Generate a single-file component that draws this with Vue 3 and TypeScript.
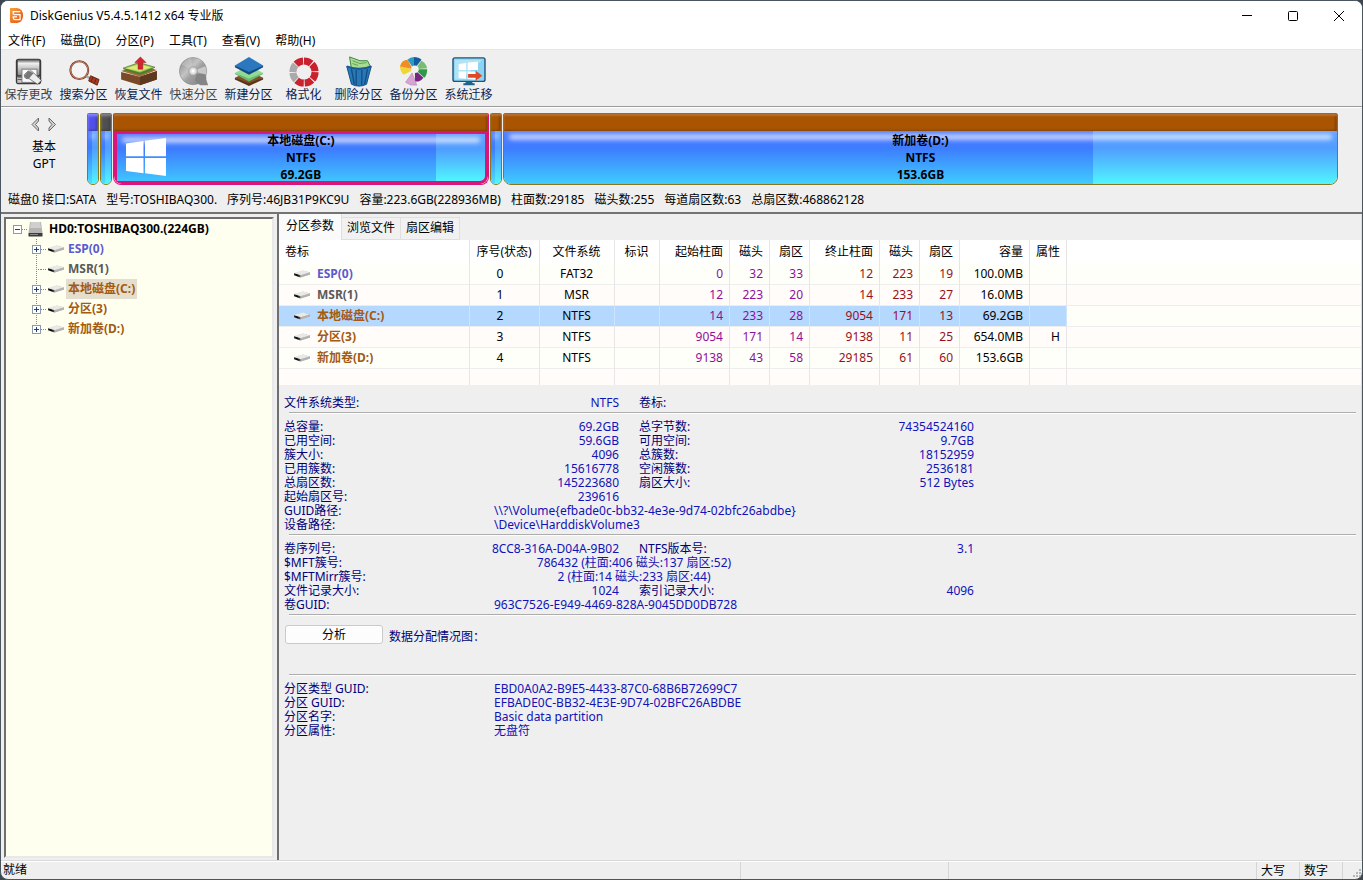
<script setup lang="ts">
import { ref } from 'vue'

interface Volume {
  name: string
  tone: string
  index: number
  fs: string
  start: number[]
  end: number[]
  size: string
  attr: string
  expandable: boolean
}

interface Segment {
  kind: string
  grow: number
  used: number
  lines: string[]
}

interface Detail {
  label: string
  value: string
  label2?: string
  value2?: string
  mode?: string
}

const menus = ['文件(F)', '磁盘(D)', '分区(P)', '工具(T)', '查看(V)', '帮助(H)']
const tools = [
  { icon: 'save', text: '保存更改', dim: true },
  { icon: 'search', text: '搜索分区', dim: false },
  { icon: 'recover', text: '恢复文件', dim: false },
  { icon: 'quick', text: '快速分区', dim: true },
  { icon: 'create', text: '新建分区', dim: false },
  { icon: 'format', text: '格式化', dim: false },
  { icon: 'remove', text: '删除分区', dim: false },
  { icon: 'backup', text: '备份分区', dim: false },
  { icon: 'migrate', text: '系统迁移', dim: false },
]

const segments: Segment[] = [
  { kind: 'esp', grow: 0, used: 40, lines: [] },
  { kind: 'msr', grow: 0, used: 40, lines: [] },
  { kind: 'active', grow: 375, used: 86.8, lines: ['本地磁盘(C:)', 'NTFS', '69.2GB'] },
  { kind: 'thin', grow: 0, used: 40, lines: [] },
  { kind: 'wide', grow: 836, used: 70.7, lines: ['新加卷(D:)', 'NTFS', '153.6GB'] },
]

const volumes: Volume[] = [
  { name: 'ESP(0)', tone: 'violet', index: 0, fs: 'FAT32', start: [0, 32, 33], end: [12, 223, 19], size: '100.0MB', attr: '', expandable: true },
  { name: 'MSR(1)', tone: 'grey', index: 1, fs: 'MSR', start: [12, 223, 20], end: [14, 233, 27], size: '16.0MB', attr: '', expandable: false },
  { name: '本地磁盘(C:)', tone: 'brown', index: 2, fs: 'NTFS', start: [14, 233, 28], end: [9054, 171, 13], size: '69.2GB', attr: '', expandable: true },
  { name: '分区(3)', tone: 'brown', index: 3, fs: 'NTFS', start: [9054, 171, 14], end: [9138, 11, 25], size: '654.0MB', attr: 'H', expandable: true },
  { name: '新加卷(D:)', tone: 'brown', index: 4, fs: 'NTFS', start: [9138, 43, 58], end: [29185, 61, 60], size: '153.6GB', attr: '', expandable: true },
]

const columns = [
  { text: '卷标', cls: 'c-name' },
  { text: '序号(状态)', cls: 'c-70 mid' },
  { text: '文件系统', cls: 'c-75 mid' },
  { text: '标识', cls: 'c-45 mid' },
  { text: '起始柱面', cls: 'c-70 end' },
  { text: '磁头', cls: 'c-40 end' },
  { text: '扇区', cls: 'c-40 end' },
  { text: '终止柱面', cls: 'c-70 end' },
  { text: '磁头', cls: 'c-40 end' },
  { text: '扇区', cls: 'c-40 end' },
  { text: '容量', cls: 'c-70 end' },
  { text: '属性', cls: 'c-37 end' },
]

const groups: Detail[][] = [
  [{ label: '文件系统类型:', value: 'NTFS', label2: '卷标:', value2: '' }],
  [
    { label: '总容量:', value: '69.2GB', label2: '总字节数:', value2: '74354524160' },
    { label: '已用空间:', value: '59.6GB', label2: '可用空间:', value2: '9.7GB' },
    { label: '簇大小:', value: '4096', label2: '总簇数:', value2: '18152959' },
    { label: '已用簇数:', value: '15616778', label2: '空闲簇数:', value2: '2536181' },
    { label: '总扇区数:', value: '145223680', label2: '扇区大小:', value2: '512 Bytes' },
    { label: '起始扇区号:', value: '239616' },
    { label: 'GUID路径:', value: '\\\\?\\Volume{efbade0c-bb32-4e3e-9d74-02bfc26abdbe}', mode: 'left' },
    { label: '设备路径:', value: '\\Device\\HarddiskVolume3', mode: 'left' },
  ],
  [
    { label: '卷序列号:', value: '8CC8-316A-D04A-9B02', label2: 'NTFS版本号:', value2: '3.1' },
    { label: '$MFT簇号:', value: '786432 (柱面:406 磁头:137 扇区:52)', mode: 'center' },
    { label: '$MFTMirr簇号:', value: '2 (柱面:14 磁头:233 扇区:44)', mode: 'center' },
    { label: '文件记录大小:', value: '1024', label2: '索引记录大小:', value2: '4096' },
    { label: '卷GUID:', value: '963C7526-E949-4469-828A-9045DD0DB728', mode: 'left' },
  ],
]

const guids: Detail[] = [
  { label: '分区类型 GUID:', value: 'EBD0A0A2-B9E5-4433-87C0-68B6B72699C7', mode: 'left' },
  { label: '分区 GUID:', value: 'EFBADE0C-BB32-4E3E-9D74-02BFC26ABDBE', mode: 'left' },
  { label: '分区名字:', value: 'Basic data partition', mode: 'left' },
  { label: '分区属性:', value: '无盘符', mode: 'left' },
]

const tabs = ['分区参数', '浏览文件', '扇区编辑']
const activeTab = ref(0)
const selected = ref(2)
</script>

<template>
  <div class="window">
    <svg class="defs" width="0" height="0" aria-hidden="true">
      <defs>
        <linearGradient id="g-steel" x1="0" y1="0" x2="0" y2="1">
          <stop offset="0" stop-color="#444" /><stop offset=".12" stop-color="#999" /><stop offset=".25" stop-color="#f0f0f0" /><stop offset="1" stop-color="#8a8a8a" />
        </linearGradient>
        <linearGradient id="g-disc" x1="0" y1="0" x2="1" y2="1">
          <stop offset="0" stop-color="#808080" /><stop offset=".4" stop-color="#c4c4c4" /><stop offset=".55" stop-color="#a0a0a0" /><stop offset="1" stop-color="#808080" />
        </linearGradient>
        <linearGradient id="g-drive" x1="0" y1="0" x2="1" y2="0">
          <stop offset="0" stop-color="#e8e8e8" /><stop offset="1" stop-color="#b0b0b0" />
        </linearGradient>
        <linearGradient id="g-front" x1="0" y1="0" x2="1" y2="0">
          <stop offset="0" stop-color="#333" /><stop offset=".5" stop-color="#000" /><stop offset="1" stop-color="#666" />
        </linearGradient>
        <linearGradient id="g-logo" x1="0" y1="0" x2="1" y2="1">
          <stop offset="0" stop-color="#f9a040" /><stop offset="1" stop-color="#e2530c" />
        </linearGradient>
        <symbol id="drive" viewBox="0 0 18 10">
          <path d="M1 4 10 1.500l7 2V5.500L8 8.500 1 6z" fill="url(#g-drive)" />
          <path d="M2 3.800 10 1.500l6.500 2L8 6z" fill="#e9e9e6" />
          <path d="M7.500 6.200 17 3.600v2L7.500 8.600z" fill="#b2b2b2" />
          <path d="M1 4.200 7.500 6.300v2.300L1 6.200z" fill="url(#g-front)" />
        </symbol>
      </defs>
    </svg>

    <header class="titlebar">
      <svg class="logo" viewBox="0 0 16 18">
        <path d="M1 1h7.500Q15 2 15 9t-6.500 8H3q-2 0-2-2z" fill="url(#g-logo)" />
        <path d="M12 4.800H4.500V8M5 8h6.800v5.500H6.500Q4.500 13.500 4.500 11.500V10.500H8.500" fill="none" stroke="#fff" stroke-width="1.300" />
      </svg>
      <h1>DiskGenius V5.4.5.1412 x64 专业版</h1>
      <div class="caption-buttons">
        <button type="button" aria-label="最小化"><svg viewBox="0 0 12 12"><path d="M1 5.500h10" /></svg></button>
        <button type="button" aria-label="最大化"><svg viewBox="0 0 12 12"><rect x="1.500" y="1.500" width="9" height="9" rx="1" /></svg></button>
        <button type="button" aria-label="关闭"><svg viewBox="0 0 12 12"><path d="m1 1 10 10M11 1 1 11" /></svg></button>
      </div>
    </header>

    <nav class="menubar">
      <button v-for="m in menus" :key="m" type="button">{{ m }}</button>
    </nav>

    <div class="toolbar">
      <button v-for="t in tools" :key="t.icon" type="button" :class="{ dim: t.dim }">
        <svg viewBox="0 0 34 32">
          <g v-if="t.icon === 'save'">
            <rect x="3" y="2" width="27" height="27" rx="3" fill="#3a3a3a" />
            <rect x="5" y="2.500" width="23" height="17" rx="1" fill="url(#g-steel)" />
            <rect x="4.500" y="21" width="24" height="6.500" fill="#c4c4c4" />
            <path d="M5 21.500h23M5 24h23" stroke="#555" />
            <rect x="9.500" y="13" width="16" height="14" fill="#fafafa" stroke="#777" />
            <path d="m12 19 4-4q4-1 6 2l8 8-4 4-9-6q-5 1-5-4z" fill="#eee" stroke="#555" stroke-width=".8" />
            <path d="m12 20 4-5 6 2-5 6q-4 1-5-3z" fill="#777" />
          </g>
          <g v-else-if="t.icon === 'search'">
            <circle cx="12" cy="14" r="9.500" fill="#f4f4f4" stroke="#7d3b25" stroke-width="2.200" />
            <circle cx="12" cy="14" r="9.300" fill="none" stroke="#e0a888" stroke-width=".7" />
            <path d="m19.500 20.500 3.500 2" stroke="#aaa" stroke-width="2.500" />
            <path d="m24 20 9 4-2 6-9-4.500z" fill="#a83b1f" stroke="#63200f" />
            <path d="m26.500 21.500-2 5M30 23l-2 5" stroke="#60200f" />
          </g>
          <g v-else-if="t.icon === 'recover'">
            <path d="m-2 15 18-6 20 5-18 7z" fill="#a56b3a" />
            <path d="m-2 16 20 5 18-6v9l-18 6-20-6z" fill="#7a4a28" />
            <path d="m18 21 18-6v9l-18 6z" fill="#5c3820" />
            <path d="m0 14 17-6 17 5-16 6z" fill="#4e802e" />
            <path d="m0 12 17-6 17 5-16 6z" fill="#9fca59" stroke="#466b20" stroke-width=".7" />
            <path d="m3 12 14-4 13 3-12 4z" fill="#e0e879" />
            <path d="M16 13V6h-3.500l6-6 6 6H21v7z" fill="#d9232e" stroke="#831820" stroke-width=".5" />
          </g>
          <g v-else-if="t.icon === 'quick'">
            <circle cx="16" cy="15" r="14.500" fill="url(#g-disc)" stroke="#888" stroke-width=".6" />
            <path d="M16 15 4 8q4-6 10-7z" fill="#ccc" opacity=".5" />
            <path d="M16 15 29 10q2 4 1 9z" fill="#ddd" opacity=".7" />
            <circle cx="16" cy="15" r="4.500" fill="#ddd" stroke="#999" />
            <circle cx="16" cy="15" r="1.800" fill="#fff" />
            <path d="M20 18h6q5 0 4 6l2 6h-8q-6-2-6-6z" fill="#858585" />
          </g>
          <g v-else-if="t.icon === 'create'">
            <path d="m2 22 15-7 15 7-15 8z" fill="#815028" /><path d="m2 22 15 6 15-6v2l-15 7-15-7z" fill="#58351c" />
            <path d="m2 17 15-8 15 8-15 7z" fill="#8fdc91" /><path d="m2 17 15 6 15-6v1l-15 8-15-8z" fill="#6cb873" />
            <path d="M2 9 17 0l15 9-15 9z" fill="#2b78bf" /><path d="m2 9 15 7 15-7v2l-15 8-15-8z" fill="#134a84" />
          </g>
          <g v-else-if="t.icon === 'format'" fill="none" stroke-width="7.500" stroke-dasharray="8.250 1">
            <path d="M17 4.220a11.780 11.780 0 0 1 0 23.560A11.780 11.780 0 0 1 8.670 24.330" stroke="#c9212e" />
            <path d="M8.670 7.670A11.780 11.780 0 0 1 17 4.220" stroke="#c9212e" />
            <path d="M8.670 24.330A11.780 11.780 0 0 1 8.670 7.670" stroke="#aaa" />
          </g>
          <g v-else-if="t.icon === 'remove'">
            <path d="m7 0 11 4 8 0 3 6-5 3H9z" fill="#a9dc91" stroke="#34813c" /><path d="m10 4 8 3 7-1M10 7l6 2" fill="none" stroke="#58a452" />
            <path d="M4 10q13 5 26 0l-5 19q-8 4-16 0z" fill="#2878b7" stroke="#124b80" />
            <path d="m9 13 3 16m2-15v16m6-16v16m6-17-3 16" stroke="#124b80" stroke-width="1.300" />
            <path d="M4 10q13 5 26 0" fill="none" stroke="#185a93" stroke-width="2" />
          </g>
          <g v-else-if="t.icon === 'backup'">
            <path d="M17 13 10 3q3-3 7-3z" fill="#2b9bc6" /><path d="M17 13V0q5 0 8 3z" fill="#175b9f" />
            <path d="m18 13 7-9q5 3 6 8z" fill="#74bd72" /><path d="M18 13h13q0 6-3 9z" fill="#2f9945" />
            <path d="m18 14 9 8q-4 5-9 4z" fill="#762582" /><path d="m15 17 5 13q-7 1-12-3z" fill="#d8a3d3" stroke="#a777a5" stroke-width=".5" />
            <path d="m16 14-10 5q-4-4-4-10z" fill="#eed637" /><path d="M16 13 2 10q2-7 8-7z" fill="#f08e25" />
            <circle cx="18" cy="13" r="4" fill="#f1f1f1" />
          </g>
          <g v-else>
            <rect x="0" y="1" width="34" height="25" rx="2" fill="#8dd4f3" stroke="#1e5479" stroke-width="1.500" />
            <path d="M2 3h29L9 24H2z" fill="#b0e3f6" />
            <path d="m6 7.500 8-1V14H6zM15.500 6l11-1v9h-11zM6 15.500h8v8l-8-1zM15.500 15.500h11v9l-11-1z" fill="#fff" />
            <path d="M16 18h8v-3.500l7 5.500-7 5.500V22h-8z" fill="#df4928" />
            <path d="M14 26h6l1 2h2v2H11v-2h2z" fill="#1f6388" />
          </g>
        </svg>
        <span>{{ t.text }}</span>
      </button>
    </div>

    <section class="disk" aria-label="磁盘分区图">
      <div class="disk-side">
        <div class="arrows">
          <button type="button" aria-label="上一磁盘"><svg viewBox="0 0 11 15"><path d="M7.500 1 1 7.500 7.500 14V11L4.500 7.500l3-3.500z" /></svg></button>
          <button type="button" aria-label="下一磁盘"><svg viewBox="0 0 11 15"><path d="M3 1 9.500 7.500 3 14V11L6 7.500 3 4z" /></svg></button>
        </div>
        <span>基本</span>
        <span>GPT</span>
      </div>
      <div class="bars">
        <div v-for="s in segments" :key="s.kind" class="bar" :class="[s.kind, { small: !s.grow }]" :style="s.grow ? { flexGrow: s.grow } : {}">
          <div class="bar-head"></div>
          <div class="bar-body">
            <div class="used" :style="{ width: s.used + '%' }"></div>
            <div class="shine"></div>
            <svg v-if="s.kind === 'active'" class="win" viewBox="0 0 40 38"><path d="M0 5.500 17.500 3v15.300H0zM19 2.800 40 0v18.300H19zM0 20h17.500v15.200L0 33zM19 20h21v18l-21-2.800z" fill="#fff" /></svg>
            <div class="bar-text"><span v-for="l in s.lines" :key="l">{{ l }}</span></div>
          </div>
        </div>
      </div>
    </section>
    <p class="disk-info">
      <span>磁盘0 接口:SATA</span><span>型号:TOSHIBAQ300.</span><span>序列号:46JB31P9KC9U</span><span>容量:223.6GB(228936MB)</span><span>柱面数:29185</span><span>磁头数:255</span><span>每道扇区数:63</span><span>总扇区数:468862128</span>
    </p>

    <main>
      <aside class="tree">
        <div class="node root">
          <button type="button" class="box" aria-label="折叠"><svg viewBox="0 0 9 9"><path d="M2 4.500h5" /></svg></button>
          <i class="dots"></i>
          <svg class="hd" viewBox="0 0 15 16">
            <path d="M2 1h11l1.500 11H.5z" fill="#b4b4b4" /><path d="M3 1h9l1 6H2z" fill="#cfcfcf" /><path d="M.5 12h14v3.500H.5z" fill="#3c3c3c" /><path d="M2 13.500h8" stroke="#888" />
          </svg>
          <strong>HD0:TOSHIBAQ300.(224GB)</strong>
        </div>
        <ul>
          <li v-for="v in volumes" :key="v.index" class="node">
            <button v-if="v.expandable" type="button" class="box" aria-label="展开"><svg viewBox="0 0 9 9"><path d="M2 4.500h5M4.500 2v5" /></svg></button>
            <span v-else class="stub"></span>
            <i class="dots"></i>
            <svg class="drive"><use href="#drive" /></svg>
            <button type="button" class="vol" :class="[v.tone, { picked: v.index === selected }]" @click="selected = v.index">{{ v.name }}</button>
          </li>
        </ul>
      </aside>

      <section class="pane">
        <div class="tabs" role="tablist">
          <button v-for="(t, i) in tabs" :key="t" type="button" role="tab" :aria-selected="i === activeTab" :class="{ on: i === activeTab }" @click="activeTab = i">{{ t }}</button>
        </div>
        <table>
          <thead>
            <tr><th v-for="(c, i) in columns" :key="i" :class="c.cls">{{ c.text }}</th><th class="rest"></th></tr>
          </thead>
          <tbody>
            <tr v-for="v in volumes" :key="v.index" :class="{ sel: v.index === selected }" @click="selected = v.index">
              <td class="name" :class="v.tone"><span><svg class="drive"><use href="#drive" /></svg>{{ v.name }}</span></td>
              <td class="mid off">{{ v.index }}</td>
              <td class="mid">{{ v.fs }}</td>
              <td></td>
              <td v-for="(n, i) in v.start" :key="'s' + i" class="end purple">{{ n }}</td>
              <td v-for="(n, i) in v.end" :key="'e' + i" class="end red">{{ n }}</td>
              <td class="end">{{ v.size }}</td>
              <td class="end">{{ v.attr }}</td>
              <td class="rest"></td>
            </tr>
            <tr class="blank"><td v-for="n in 12" :key="n"></td><td class="rest"></td></tr>
          </tbody>
        </table>

        <div class="details">
          <dl v-for="(g, gi) in groups" :key="gi">
            <div v-for="d in g" :key="d.label" class="row" :class="d.mode">
              <div class="pair"><dt>{{ d.label }}</dt><dd>{{ d.value }}</dd></div>
              <div v-if="d.label2" class="pair"><dt>{{ d.label2 }}</dt><dd>{{ d.value2 }}</dd></div>
            </div>
          </dl>
          <div class="analyse">
            <button type="button">分析</button>
            <span>数据分配情况图：</span>
          </div>
          <dl class="last">
            <div v-for="d in guids" :key="d.label" class="row left">
              <div class="pair"><dt>{{ d.label }}</dt><dd>{{ d.value }}</dd></div>
            </div>
          </dl>
        </div>
      </section>
    </main>

    <footer class="status">
      <span class="msg">就绪</span>
      <span class="cell s208"></span>
      <span class="cell s308"></span>
      <span class="cell s43">大写</span>
      <span class="cell s43">数字</span>
      <span class="cell grip">
        <svg viewBox="0 0 9 9"><path d="M6 0h2v2H6zM3 3h2v2H3zM6 3h2v2H6zM0 6h2v2H0zM3 6h2v2H3zM6 6h2v2H6z" fill="#b5b5b5" /></svg>
      </span>
    </footer>
  </div>
</template>

<style>
html,
body {
  background: #3c4652;
}
</style>

<style scoped>
.window {
  box-sizing: border-box;
  min-height: 100vh;
  display: flex;
  flex-direction: column;
  border: 1px solid #4a5560;
  border-radius: 8px;
  overflow: hidden;
  background: #efefef;
  color: #000;
  font: 12px/16px 'Noto Sans', 'Noto Sans CJK SC', sans-serif;
}
.defs {
  position: absolute;
}
button {
  margin: 0;
  padding: 0;
  border: 0;
  background: none;
  color: inherit;
  font: inherit;
}
svg {
  display: block;
  flex: none;
}
.titlebar {
  display: flex;
  align-items: center;
  height: 29px;
  padding-left: 8px;
  background: #fff;
}
.logo {
  width: 15px;
  height: 17px;
}
h1 {
  margin: 0 0 0 6px;
  font-size: 12px;
  font-weight: 400;
}
.caption-buttons {
  display: flex;
  margin-left: auto;
}
.caption-buttons button {
  width: 46px;
  height: 28px;
  display: grid;
  place-items: center;
}
.caption-buttons svg {
  width: 12px;
  height: 12px;
  fill: none;
  stroke: #000;
}
.menubar {
  display: flex;
  gap: 15px;
  height: 19px;
  padding: 0 7px;
  background: #fff;
  border-bottom: 1px solid #e6e6e6;
}
.menubar button {
  line-height: 22px;
}
.toolbar {
  display: flex;
  height: 56px;
  border-bottom: 1px solid #9a9a9a;
}
.toolbar button {
  width: 55px;
  padding-top: 6px;
  display: flex;
  flex-direction: column;
  align-items: center;
  color: #0b1d4d;
}
.toolbar .dim {
  color: #444;
}
.toolbar svg {
  width: 32px;
  height: 32px;
  overflow: visible;
}
.toolbar span {
  line-height: 14px;
}
.disk {
  display: flex;
  padding: 5px 24px 4px 0;
  border-top: 1px solid #fff;
}
.disk-side {
  width: 86px;
  display: flex;
  flex-direction: column;
  align-items: center;
  line-height: 17px;
}
.arrows {
  display: flex;
  gap: 4px;
  margin: 4px 0 6px;
}
.arrows svg {
  width: 11px;
  height: 15px;
  fill: #d2d2d2;
  stroke: #666;
}
.bars {
  flex: 1;
  display: flex;
  gap: 1px;
}
.bar {
  box-sizing: border-box;
  flex: 0 1 0;
  height: 72px;
  display: flex;
  flex-direction: column;
  border: 1px solid #857620;
  border-radius: 2px 2px 8px 8px;
  overflow: hidden;
}
.bar.small {
  flex: none;
  width: 12px;
}
.bar-head {
  height: 17px;
  background: #a85400;
  box-shadow: inset 0 2px 2px #b87030, inset -2px -1px 2px #804000;
}
.esp .bar-head {
  background: #5050ea;
  box-shadow: inset 0 2px 3px #8a8aff, inset -2px -1px 2px #3434a0;
}
.msr .bar-head {
  background: #505050;
  box-shadow: inset 0 2px 3px #888, inset -2px -1px 2px #333;
}
.bar-body {
  position: relative;
  flex: 1;
  display: flex;
  background: linear-gradient(#6aa4ff, #509dff 32%, #50f6ff);
}
.active .bar-body {
  border: 3px solid #d9157c;
  border-radius: 0 0 8px 8px;
}
.active {
  border-color: #d9157c;
  border-top-color: #857620;
}
.used {
  background: linear-gradient(#5a80ff, #3d7cff 32%, #40ccff);
}
.active .used {
  background: linear-gradient(#5a80ff, #3d7cff 32%, #40c4ff);
}
.small .used {
  background: linear-gradient(#5a80ff, #3d7cff 32%, #48e0ff);
}
.shine {
  position: absolute;
  inset: 3px 5px auto;
  height: 6px;
  border-radius: 3px;
  background: #fff;
  opacity: .6;
  filter: blur(2px);
}
.small .shine {
  inset: 2px 3px auto;
  opacity: .5;
}
.win {
  position: absolute;
  left: 9px;
  top: 4px;
  width: 40px;
  height: 38px;
}
.bar-text {
  position: absolute;
  inset: 0;
  display: flex;
  flex-direction: column;
  align-items: center;
  justify-content: center;
  font-weight: 700;
  line-height: 17px;
  white-space: nowrap;
}
.disk-info {
  display: flex;
  gap: 10px;
  margin: 0;
  padding: 3px 7px 4px;
  white-space: nowrap;
}
main {
  flex: 1;
  display: flex;
  border-top: 2px solid #737373;
}
.tree {
  box-sizing: border-box;
  flex: none;
  width: 270px;
  margin: 3px 3px 2px;
  padding: 0 7px;
  background: #fffff0;
  border: 2px solid #6f6f6f;
  border-right-color: #e8e8e8;
  border-bottom-color: #e8e8e8;
}
.node {
  display: flex;
  align-items: center;
  height: 20px;
}
.tree strong {
  margin-left: 6px;
}
.box,
.stub {
  flex: none;
  width: 9px;
  height: 9px;
}
.box {
  background: #fff;
  box-shadow: inset 0 0 0 1px #8c9aae;
}
.box svg {
  width: 9px;
  height: 9px;
  stroke: #263f78;
}
.stub {
  background: repeating-linear-gradient(to right, #888 0 1px, transparent 1px 2px) 4px 4px / 5px 1px no-repeat;
}
.dots {
  width: 6px;
  height: 1px;
  background: repeating-linear-gradient(to right, #888 0 1px, transparent 1px 2px);
}
.hd {
  width: 15px;
  height: 16px;
}
.tree ul {
  margin: 0;
  padding: 0 0 0 19px;
  list-style: none;
}
.tree li {
  background: repeating-linear-gradient(#888 0 1px, transparent 1px 2px) 4px 0 / 1px 100% no-repeat;
}
.tree li:last-child {
  background-size: 1px 50%;
}
.drive {
  width: 18px;
  height: 10px;
}
.vol {
  margin-left: 1px;
  padding: 0 2px;
  font-weight: 700;
  line-height: 20px;
  white-space: nowrap;
}
.picked {
  background: #e4decf;
}
.violet {
  color: #5a5ad2;
}
.grey {
  color: #5a5a5a;
}
.brown {
  color: #a35a12;
}
.pane {
  flex: 1;
  min-width: 0;
  border-left: 2px solid #6f6f6f;
  border-right: 1px solid #dcdcdc;
}
.tabs {
  display: flex;
  align-items: flex-end;
  height: 26px;
}
.tabs button {
  box-sizing: border-box;
  width: 59px;
  height: 23px;
  padding-bottom: 1px;
  background: #f1f1f1;
  border: 1px solid #dfdfdf;
  border-left-width: 0;
}
.tabs .on {
  width: 63px;
  height: 26px;
  padding-bottom: 3px;
  background: #fafafa;
  border-width: 0 1px 0 0;
}
table {
  width: 100%;
  border-collapse: separate;
  border-spacing: 0;
  table-layout: fixed;
  background: #fff;
}
th,
td {
  box-sizing: border-box;
  padding: 0 6px;
  font-weight: 400;
  text-align: left;
  white-space: nowrap;
  border-right: 1px solid #e6e6e6;
}
th {
  height: 24px;
}
td {
  height: 21px;
  background: #fffffa;
  border-bottom: 1px solid #ededed;
}
tr:nth-child(even) td {
  background: #fffcf9;
}
tr.sel td:not(.rest) {
  background: #b5d8ff;
  border-right-color: #cfe4fa;
}
.blank td {
  height: 16px;
  border-bottom: 0;
}
.c-name {
  width: 191px;
  padding-left: 6px;
}
.c-70 {
  width: 70px;
}
.c-75 {
  width: 75px;
}
.c-45 {
  width: 45px;
}
.c-40 {
  width: 40px;
}
.c-37 {
  width: 37px;
}
th.mid,
td.mid {
  padding: 0 1px 0 0;
  text-align: center;
}
td.off {
  padding-right: 9px;
}
.end {
  padding-left: 0;
  text-align: right;
}
.rest,
.blank .rest {
  border-right: 0;
}
.purple {
  color: #8f0f9a;
}
.red {
  color: #98101a;
}
td.name {
  padding-left: 14px;
  font-weight: 700;
}
td.name span {
  display: flex;
  align-items: center;
  gap: 6px;
}
.details {
  padding: 5px 5px 0;
  color: #00007a;
  line-height: 14px;
  white-space: nowrap;
}
dl {
  margin: 0;
  padding-top: 6px;
}
dl:not(.last)::after,
.analyse::after {
  content: '';
  display: block;
  height: 1px;
  margin: 2px 0 0 5px;
  background: #adadad;
  border-bottom: 1px solid #fff;
}
.row {
  display: flex;
  gap: 20px;
}
.pair {
  display: flex;
  justify-content: space-between;
  width: 335px;
  height: 14px;
}
dd {
  margin: 0;
  color: #1212b8;
}
.left dt,
.center dt {
  flex: none;
  width: 210px;
}
.center dd {
  flex: none;
  width: 280px;
  text-align: center;
}
.left .pair {
  justify-content: flex-start;
}
.analyse {
  display: grid;
  grid-template-columns: 99px 1fr;
  column-gap: 6px;
  padding-top: 9px;
}
.analyse::after {
  grid-column: 1 / -1;
  margin-top: 30px;
}
.analyse button {
  height: 19px;
  margin-left: 1px;
  background: #fdfdfd;
  border: 1px solid #cacaca;
  border-radius: 3px;
  color: #000;
  line-height: 16px;
}
.analyse span {
  padding-top: 5px;
}
.status {
  display: flex;
  height: 18px;
  border-top: 1px solid #d9d9d9;
  box-shadow: inset 0 1px #fff;
  line-height: 18px;
}
.msg {
  flex: 1;
  padding-left: 2px;
}
.cell {
  box-sizing: border-box;
  margin-top: 1px;
  padding-left: 4px;
  border-left: 1px solid #d5d5d5;
}
.s208 {
  width: 208px;
}
.s308 {
  width: 308px;
}
.s43 {
  width: 43px;
}
.grip {
  width: 20px;
  display: flex;
  align-items: flex-end;
  justify-content: flex-end;
  padding-bottom: 1px;
}
.grip svg {
  width: 9px;
  height: 9px;
}
</style>
